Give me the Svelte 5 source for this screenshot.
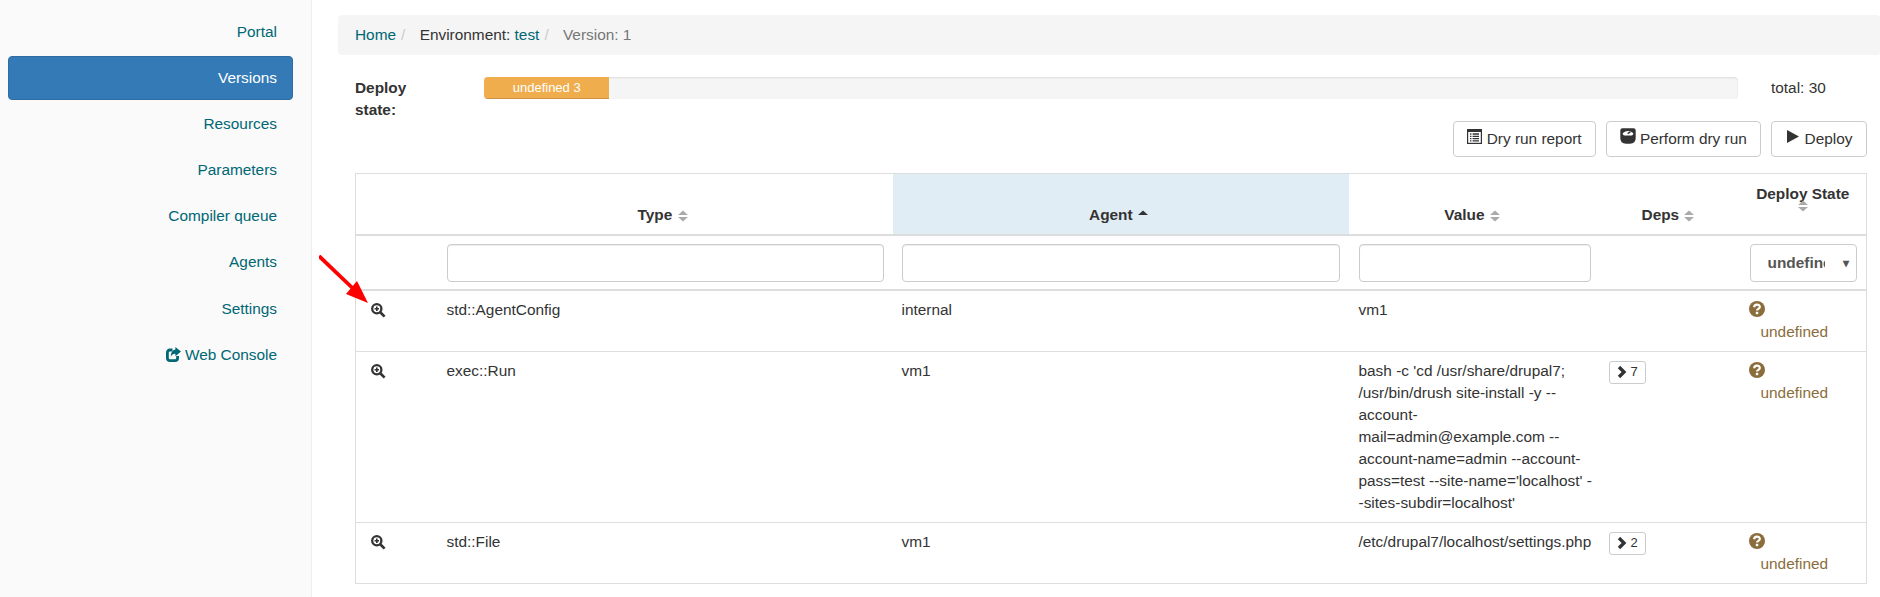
<script lang="ts">
	const nav = ['Portal', 'Versions', 'Resources', 'Parameters', 'Compiler queue', 'Agents', 'Settings'];

	interface Row {
		type: string;
		agent: string;
		value: string;
		deps?: number;
	}

	const rows: Row[] = [
		{ type: 'std::AgentConfig', agent: 'internal', value: 'vm1' },
		{
			type: 'exec::Run',
			agent: 'vm1',
			value:
				"bash -c 'cd /usr/share/drupal7; /usr/bin/drush site-install -y --account-mail=admin@example.com --account-name=admin --account-pass=test --site-name='localhost' -\u200b-sites-subdir=localhost'",
			deps: 7
		},
		{ type: 'std::File', agent: 'vm1', value: '/etc/drupal7/localhost/settings.php', deps: 2 }
	];
</script>

{#snippet sort(active = false)}
	<svg class="sort" width="10" height="12" viewBox="0 0 10 12">
		<path d="M0 5 L5 0.5 L10 5Z" fill={active ? '#333' : '#aaa'} />
		{#if !active}
			<path d="M0 7 L5 11.5 L10 7Z" fill="#aaa" />
		{/if}
	</svg>
{/snippet}

{#snippet zoomIcon()}
	<svg class="zoom" width="15" height="15" viewBox="0 0 15 15">
		<circle cx="5.8" cy="5.8" r="4.6" fill="#fff" stroke="#333" stroke-width="2.3" />
		<path d="M9.5 9.5 L13.6 13.6" stroke="#333" stroke-width="2.6" />
		<path d="M3.6 5.8 H8 M5.8 3.6 V8" stroke="#333" stroke-width="1.6" />
	</svg>
{/snippet}

{#snippet stateCell()}
	<svg class="help" width="16" height="16" viewBox="0 0 16 16">
		<circle cx="8" cy="8" r="8" fill="#8a6d3b" />
		<path d="M5.2 6.2 C5.2 2.8 10.8 2.8 10.8 6 C10.8 8 8 7.8 8 9.6" fill="none" stroke="#fff" stroke-width="2.2" />
		<rect x="6.8" y="10.8" width="2.5" height="2.4" fill="#fff" />
	</svg>
	<div class="state-label">undefined</div>
{/snippet}

<div class="page">
	<nav class="sidebar">
		{#each nav as item}
			<a class="nav-item" class:active={item === 'Versions'} href="#top">{item}</a>
		{/each}
		<a class="nav-item" href="#top">
			<svg width="15" height="15" viewBox="0 0 15 15">
				<path d="M11.6 9 V11 Q11.6 13.6 9 13.6 H4 Q1.4 13.6 1.4 11 V5.6 Q1.4 3 4 3 H6.5" fill="none" stroke="#006775" stroke-width="2.8" />
				<path d="M9.4 0 L15 4.6 L9.4 9.2 V6.8 Q6.2 6.6 4.8 9.8 Q4.8 3.4 9.4 2.6Z" fill="#006775" />
			</svg>
			Web Console
		</a>
	</nav>

	<main class="content">
		<ol class="breadcrumb">
			<li><a href="#top">Home</a></li>
			<li>Environment: <a href="#top">test</a></li>
			<li class="current">Version: 1</li>
		</ol>

		<div class="inner">
			<div class="deploy-state">
				<strong class="deploy-label">Deploy state:</strong>
				<div class="progress">
					<div class="bar" style="width: 10%">undefined 3</div>
				</div>
				<div class="total">total: 30</div>
			</div>

			<div class="actions">
				<button>
					<svg width="15" height="15" viewBox="0 0 15 15">
						<rect x="0.6" y="0.6" width="13.8" height="13.8" fill="#fff" stroke="#333" stroke-width="1.2" />
						<rect x="0.6" y="0.6" width="13.8" height="2.4" fill="#333" />
						<path d="M3 5 H4.4 M5.6 5 H12 M3 7.3 H4.4 M5.6 7.3 H12 M3 9.6 H4.4 M5.6 9.6 H12 M3 11.9 H4.4 M5.6 11.9 H12" stroke="#333" stroke-width="1.3" />
					</svg>
					Dry run report
				</button>
				<button>
					<svg width="16" height="16" viewBox="0 0 16 16">
						<path d="M2.5 0.3 H13.5 Q15.7 0.3 15.7 2.5 V10 Q15.7 15.7 10 15.7 H6 Q0.3 15.7 0.3 10 V2.5 Q0.3 0.3 2.5 0.3Z" fill="#333" />
						<path d="M2.6 5.2 Q8 0.8 13.4 5.2 Q13 7.6 11.6 7.6 H4.4 Q3 7.6 2.6 5.2Z" fill="#fff" />
						<path d="M7.6 5.6 L10.4 3.8" stroke="#333" stroke-width="1.4" />
					</svg>
					Perform dry run
				</button>
				<button class="deploy">
					<svg width="15" height="15" viewBox="0 0 15 15">
						<path d="M2 1 L14 7.5 L2 14Z" fill="#333" />
					</svg>
					Deploy
				</button>
			</div>

			<table>
				<colgroup>
					<col style="width: 81px" />
					<col style="width: 456px" />
					<col style="width: 456px" />
					<col style="width: 251px" />
					<col style="width: 139px" />
					<col />
				</colgroup>
				<thead>
					<tr class="titles">
						<th></th>
						<th>Type {@render sort()}</th>
						<th class="sorted">Agent {@render sort(true)}</th>
						<th>Value {@render sort()}</th>
						<th class="deps-th">Deps {@render sort()}</th>
						<th class="deploy-th">Deploy State<br />{@render sort()}</th>
					</tr>
					<tr class="filters">
						<th></th>
						<th><input type="text" /></th>
						<th><input type="text" /></th>
						<th><input type="text" /></th>
						<th></th>
						<th class="select-th">
							<div class="select">
								<span>undefined</span>
								<i>▾</i>
							</div>
						</th>
					</tr>
				</thead>
				<tbody>
					{#each rows as row}
						<tr>
							<td class="icon-cell">{@render zoomIcon()}</td>
							<td>{row.type}</td>
							<td>{row.agent}</td>
							<td class="value">{row.value}</td>
							<td>
								{#if row.deps}
									<span class="deps-btn">
										<svg width="10" height="12" viewBox="0 0 10 12">
											<path d="M2 1 L7 6 L2 11" fill="none" stroke="#333" stroke-width="3.4" />
										</svg>
										{row.deps}
									</span>
								{/if}
							</td>
							<td>{@render stateCell()}</td>
						</tr>
					{/each}
				</tbody>
			</table>
		</div>

		<svg class="annotation" width="56" height="56" viewBox="0 0 56 56">
			<path d="M0 1 L34 33.5" stroke="#f00" stroke-width="3.8" />
			<path d="M49 48 L27 39 L38 26Z" fill="#f00" />
		</svg>
	</main>
</div>

<style>
	:global(body) {
		margin: 0;
		overflow: hidden;
		background: #fff;
		color: #333;
		font-family: 'Liberation Sans', Arial, sans-serif;
		font-size: 15.4px;
		line-height: 22px;
	}

	a {
		color: #006775;
		text-decoration: none;
	}

	.page {
		display: flex;
		min-height: 597px;
	}

	.sidebar {
		box-sizing: border-box;
		width: 312px;
		flex-shrink: 0;
		padding: 10px 18px 0 8px;
		background: #fafafa;
		border-right: 1px solid #eee;
		display: flex;
		flex-direction: column;
		gap: 2px;
	}

	.nav-item {
		box-sizing: border-box;
		height: 44px;
		padding: 11px 16px;
		border-radius: 4px;
		text-align: right;
	}

	.nav-item:nth-last-child(2) {
		margin-top: 1px;
	}

	.nav-item svg {
		vertical-align: -2px;
	}

	.nav-item.active {
		background: #337ab7;
		border: 1px solid #2e6da4;
		padding: 10px 15px;
		color: #fff;
	}

	.content {
		position: relative;
		flex: 1;
		min-width: 0;
		padding: 15px 0 0 26px;
	}

	.breadcrumb {
		display: flex;
		height: 40px;
		box-sizing: border-box;
		margin: 0;
		padding: 9px 17px;
		list-style: none;
		background: #f5f5f5;
		border-radius: 4px;
	}

	.breadcrumb li + li::before {
		content: '/\00a0';
		padding: 0 10px 0 5px;
		color: #ccc;
	}

	.current {
		color: #777;
	}

	.inner {
		padding: 22px 13px 0 17px;
	}

	.deploy-state {
		display: flex;
		align-items: flex-start;
		height: 44px;
	}

	.deploy-label {
		width: 129px;
		flex-shrink: 0;
		padding-right: 50px;
		box-sizing: border-box;
	}

	.progress {
		width: 1254px;
		height: 22px;
		background: #f5f5f5;
		border-radius: 4px;
		box-shadow: inset 0 1px 2px rgba(0, 0, 0, 0.1);
		overflow: hidden;
		flex-shrink: 0;
	}

	.bar {
		height: 100%;
		background: #f0ad4e;
		color: #fff;
		font-size: 13px;
		line-height: 22px;
		text-align: center;
		box-shadow: inset 0 -1px 0 rgba(0, 0, 0, 0.15);
	}

	.total {
		margin-left: 33px;
	}

	.actions {
		display: flex;
		justify-content: flex-end;
		gap: 10px;
		margin-bottom: 16px;
	}

	button {
		height: 36px;
		padding: 0 13px;
		background: #fff;
		border: 1px solid #ccc;
		border-radius: 4px;
		color: #333;
		font: inherit;
	}

	button.deploy {
		padding: 0 13.5px;
	}

	button svg {
		vertical-align: 0;
	}

	table {
		width: 100%;
		table-layout: fixed;
		border-collapse: collapse;
		border: 1px solid #ddd;
	}

	th,
	td {
		padding: 8px 9px;
		text-align: left;
		vertical-align: top;
		overflow-wrap: break-word;
	}

	th:nth-child(2),
	td:nth-child(2),
	th:nth-child(4),
	td:nth-child(4),
	th:nth-child(6),
	td:nth-child(6) {
		padding-left: 10px;
	}

	td.value {
		padding-right: 7px;
	}

	.titles th {
		height: 61px;
		box-sizing: border-box;
		padding-right: 14px;
		vertical-align: bottom;
		text-align: center;
		border-bottom: 2px solid #ddd;
	}

	.titles .sorted {
		padding-right: 13px;
		background: #e1edf5;
	}

	.titles .deps-th {
		padding-right: 11px;
	}

	.titles .deploy-th {
		vertical-align: top;
		line-height: 22px;
		padding: 9px 9px 0 10px;
	}

	.deploy-th .sort {
		display: block;
		margin: -5px auto 0;
	}

	.sort {
		margin-left: 1px;
		vertical-align: -2px;
	}

	.filters th {
		height: 53px;
		box-sizing: border-box;
		padding-bottom: 7px;
		border-bottom: 2px solid #ddd;
	}

	.filters .select-th {
		padding-left: 11px;
	}

	input {
		display: block;
		box-sizing: border-box;
		width: 100%;
		height: 38px;
		border: 1px solid #ccc;
		border-radius: 4px;
		box-shadow: inset 0 1px 1px rgba(0, 0, 0, 0.075);
		background: #fff;
	}

	.select {
		display: flex;
		align-items: center;
		box-sizing: border-box;
		height: 38px;
		padding: 0 7px 0 17px;
		border: 1px solid #ccc;
		border-radius: 4px;
		font-weight: 700;
		color: #555;
	}

	.select span {
		width: 57px;
		overflow: hidden;
		white-space: nowrap;
	}

	.select i {
		margin-left: auto;
		font-style: normal;
		font-size: 12px;
	}

	tbody td {
		border-top: 1px solid #ddd;
	}

	tbody tr:first-child td {
		border-top: none;
	}

	.icon-cell {
		padding-left: 15px;
	}

	.zoom {
		display: block;
		margin-top: 4px;
	}

	.deps-btn {
		display: inline-flex;
		align-items: center;
		gap: 4px;
		height: 23px;
		padding: 0 7px;
		margin-top: 1px;
		border: 1px solid #ccc;
		border-radius: 3px;
		font-size: 13px;
		box-sizing: border-box;
	}

	.help {
		display: block;
		margin: 2px 0 4px;
	}

	.state-label {
		padding-left: 12px;
		color: #8a6d3b;
	}

	.annotation {
		position: absolute;
		left: 7px;
		top: 255px;
	}
</style>
